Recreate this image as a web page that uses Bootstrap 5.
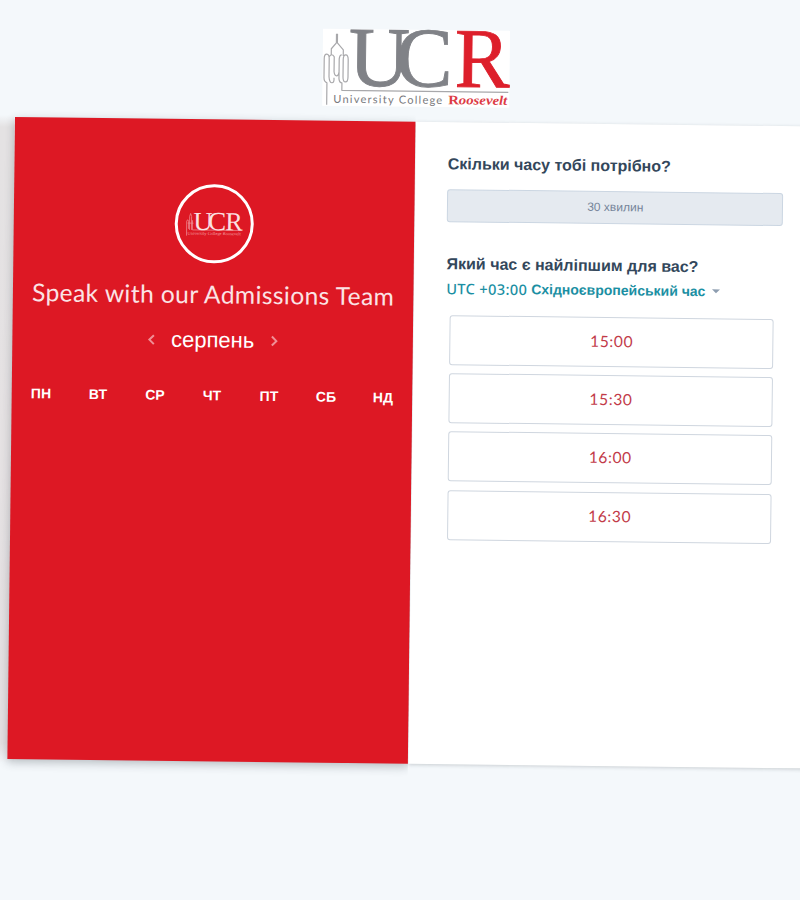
<!DOCTYPE html>
<html lang="uk">
<head>
<meta charset="utf-8">
<meta name="viewport" content="width=device-width, initial-scale=1">
<title>UCR</title>
<link href="https://cdn.jsdelivr.net/npm/bootstrap@5.3.0/dist/css/bootstrap.min.css" rel="stylesheet">
<style>
body{background:#f4f8fb;font-family:"Liberation Sans",Arial,sans-serif;color:#33475b}
.screen{height:900px;width:800px;background:linear-gradient(#f4f8fb,#e4e2e3 12px,#e6e1e3 628px,#f4f8fb) 0 115px/14px 648px no-repeat,#f4f8fb}
.stage{width:900px;margin-left:15.2px;transform:rotate(.68deg);transform-origin:0 117px}
.brand-row{height:117px;padding:25px 0 0 306.5px}
.brand-logo{display:block;width:187px;height:77px;background:#fff}
.meeting{height:642px}
.calendar{width:400.5px;background:#dd1824;color:#fff;box-shadow:0 3px 10px rgba(40,50,60,.3);clip-path:inset(-20px 0 -20px -20px);padding-top:65px;z-index:1}
.avatar{width:79px;height:79px;border:3px solid #fff}
.title{font:400 24.6px/36px Lato,sans-serif;letter-spacing:.4px;margin-top:13px;color:#fbe3e5}
.month{font-size:22px;line-height:30px;margin-top:13.4px;gap:15px}
.weekdays{font-size:14px;line-height:20px;font-weight:700;margin-top:29.4px;padding:0 1px 0 1px}
.weekdays span{width:57px}
.times{background:#fff;box-shadow:0 1px 4px rgba(40,50,60,.22);padding:30.2px 0 0 32.8px}
.question{font-size:16px;line-height:24px;font-weight:700}
.duration{width:336px;height:33px;margin-top:13px;margin-bottom:29.8px;background:#e5eaf0;border:1px solid #cbd6e2;border-radius:3px;font-size:12px;color:#75859a;padding:0 0 1px}
.zone{font-size:14px;line-height:20px;margin-top:2.3px;color:#1b8fa3;font-weight:700}
.zone-utc{font:500 14.6px/20px "Noto Sans",sans-serif;letter-spacing:.35px}
.caret{width:0;height:0;border:4px solid transparent;border-top-color:#8d9db0;border-bottom:0;margin-left:7px}
.slots{width:324px;margin:16.4px 0 0 4px;gap:8.3px}
.slot{height:50px;border:1px solid #cfd6df;border-radius:3px;font:400 15.6px/1 Lato,sans-serif;letter-spacing:.6px;color:#c23b49;background:#fff;padding:0}
</style>
<script src="https://cdn.jsdelivr.net/npm/bootstrap@5.3.0/dist/js/bootstrap.bundle.min.js"></script>
</head>
<body>
<div class="screen overflow-hidden">
<div class="stage">
  <header class="brand-row">
    <svg class="brand-logo overflow-visible" viewBox="0 0 187 77">
      <g fill="none" stroke="#a8a8ab" stroke-width="1.2" stroke-linejoin="round">
        <path d="M4.5 76V54Q1.5 53 1.5 49V30Q1.5 25.500 4 25.500T6.500 30V48Q7 54 9.500 54T11.500 49M6.500 28Q9 24 11.500 28V43Q12 47 14 47T16.500 43V30Q17 26 19 26M8.500 26V20L13.500 14V5M14.500 5V14L20.500 21V27M20.500 31Q20.500 26 23 26T25.500 31V48Q25.500 53 23 53T20.500 48V31M16.500 43V50Q17 54 19.500 54V61.500H186"/>
      </g>
      <g font-family="'Liberation Serif',serif" font-size="85" fill="#808287" stroke="#808287" stroke-width=".9">
        <text x="26" y="56.500" textLength="61" lengthAdjust="spacingAndGlyphs">U</text>
        <text x="73" y="56.500" textLength="57" lengthAdjust="spacingAndGlyphs">C</text>
        <text x="132" y="56.500" fill="#dd1f2b" stroke="#dd1f2b" textLength="55" lengthAdjust="spacingAndGlyphs">R</text>
      </g>
      <text x="11" y="74" font-family="Lato,sans-serif" font-size="11" fill="#77787c" textLength="109">University College</text>
      <text x="126" y="74" font-family="'Liberation Serif',serif" font-weight="700" font-size="13" fill="#dd3b45" textLength="59" lengthAdjust="spacingAndGlyphs">R<tspan font-style="italic">oosevelt</tspan></text>
    </svg>
  </header>
  <main class="meeting d-flex">
    <section class="calendar position-relative flex-shrink-0 d-flex flex-column align-items-center">
      <div class="avatar rounded-circle d-flex align-items-center justify-content-center">
        <svg class="overflow-visible" width="58" height="26" viewBox="0 0 60 26">
          <path d="M2 25V10Q3 7 4 10V18M5 19V5L6 2L7 5V19M8 9V19H59M3 12H9" fill="none" stroke="#ee8a91" stroke-width=".8"/>
          <g font-family="'Liberation Serif',serif" font-size="27" fill="#fbe0e2">
            <text x="9" y="19" textLength="20" lengthAdjust="spacingAndGlyphs">U</text>
            <text x="24" y="19" textLength="19" lengthAdjust="spacingAndGlyphs">C</text>
            <text x="42" y="19" textLength="18" lengthAdjust="spacingAndGlyphs">R</text>
          </g>
          <text x="3" y="24" font-family="'Liberation Serif',serif" font-size="4.5" fill="#f4a5aa" textLength="55">University College Roosevelt</text>
        </svg>
      </div>
      <div class="title text-nowrap">Speak with our Admissions Team</div>
      <div class="month d-flex align-items-center">
        <svg width="9" height="12" viewBox="0 0 9 12"><path d="M6.500 1.500L2 6l4.500 4.500" fill="none" stroke="#f08f96" stroke-width="2"/></svg>
        <span>серпень</span>
        <svg width="9" height="12" viewBox="0 0 9 12"><path d="M2.500 1.500L7 6l-4.500 4.500" fill="none" stroke="#f08f96" stroke-width="2"/></svg>
      </div>
      <div class="weekdays d-flex text-center"><span>ПН</span><span>ВТ</span><span>СР</span><span>ЧТ</span><span>ПТ</span><span>СБ</span><span>НД</span></div>
    </section>
    <section class="times flex-grow-1">
      <div class="question">Скільки часу тобі потрібно?</div>
      <button class="duration btn d-block">30 хвилин</button>
      <div class="question">Який час є найліпшим для вас?</div>
      <div class="zone d-flex align-items-center"><span class="zone-utc me-1">UTC +03:00</span><span>Східноєвропейський час</span><i class="caret"></i></div>
      <div class="slots d-flex flex-column">
        <button class="slot btn">15:00</button>
        <button class="slot btn">15:30</button>
        <button class="slot btn">16:00</button>
        <button class="slot btn">16:30</button>
      </div>
    </section>
  </main>
</div>
</div>
</body>
</html>
